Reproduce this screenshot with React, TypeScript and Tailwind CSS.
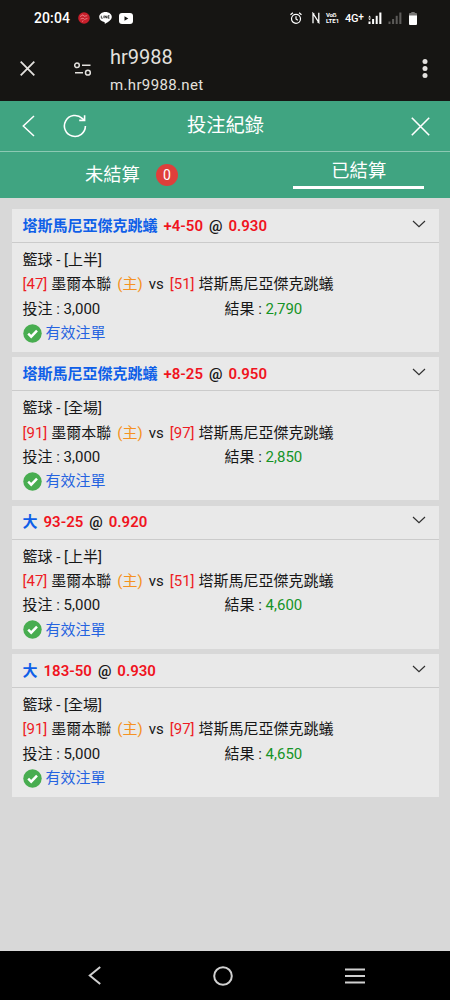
import clsx from 'clsx';

interface Bet {
  pick: string;
  handicap: string;
  odds: string;
  period: string;
  homeScore: number;
  awayScore: number;
  stake: string;
  result: string;
}

const bets: Bet[] = [
  { pick: '塔斯馬尼亞傑克跳蟻', handicap: '+4-50', odds: '0.930', period: '上半', homeScore: 47, awayScore: 51, stake: '3,000', result: '2,790' },
  { pick: '塔斯馬尼亞傑克跳蟻', handicap: '+8-25', odds: '0.950', period: '全場', homeScore: 91, awayScore: 97, stake: '3,000', result: '2,850' },
  { pick: '大', handicap: '93-25', odds: '0.920', period: '上半', homeScore: 47, awayScore: 51, stake: '5,000', result: '4,600' },
  { pick: '大', handicap: '183-50', odds: '0.930', period: '全場', homeScore: 91, awayScore: 97, stake: '5,000', result: '4,650' },
];

function SignalBars({ dim = false }: { dim?: boolean }) {
  return (
    <svg className={clsx('w-[14px] h-3', dim ? 'text-[#5c5b59]' : 'text-white')} viewBox="0 0 14 12" fill="currentColor">
      {dim ? (
        <rect x="0.5" y="9.5" width="2" height="2.5" />
      ) : (
        <path d="M0.3 5.5L1.6 3.5L2.9 5.5zM0.3 6.4H2.9L1.6 8.2zM0.5 9.5h2V12h-2z" />
      )}
      <rect x="4.1" y="7" width="2" height="5" />
      <rect x="7.7" y="3.8" width="2" height="8.2" />
      <rect x="11.3" y="0.5" width="2.1" height="11.5" />
    </svg>
  );
}

function StatusBar() {
  return (
    <div className="flex items-center h-9 pl-[34px] pr-[33px] text-white">
      <span className="w-[44px] text-[14px] font-medium leading-none tracking-[0.1px]">20:04</span>
      <svg className="w-3 h-3" viewBox="0 0 12 12">
        <circle cx="6" cy="6" r="5.8" fill="#c71f2b" />
        <path d="M2 4.6l3-1.8 1 1.5 3.2-.6M2.5 7l2.5-.8 1.6 1.2 2.8-1M4 9.6l1.4-1" stroke="#f08c90" strokeWidth="0.8" fill="none" />
      </svg>
      <svg className="w-[13px] h-3 ml-[9px]" viewBox="0 0 13 12">
        <path d="M6.5 0C2.9 0 .2 2.2.2 5c0 2.5 2.1 4.4 5 4.9.6.1.6.5.5 1.2-.1.7.2.9.8.5 2-1.2 6.3-3.6 6.3-6.6C12.8 2.2 10.1 0 6.5 0z" fill="white" />
        <path d="M2.3 3.7v2.5h1.5M4.9 3.7v2.5M6 6.2V3.7l1.7 2.5V3.7M10.5 3.7H9v2.5h1.5M9 5h1.3" stroke="#161513" strokeWidth="0.75" fill="none" />
      </svg>
      <svg className="w-[14px] h-[11px] ml-[7px]" viewBox="0 0 14 11">
        <rect width="14" height="11" rx="3" fill="white" />
        <path d="M5.5 3.2v4.6L9.3 5.5z" fill="#161513" />
      </svg>

      <div className="flex items-center ml-auto">
        <svg className="w-3 h-3" viewBox="0 0 12 12" fill="none" stroke="white" strokeWidth="1.2">
          <circle cx="6" cy="6.8" r="4.5" />
          <path d="M6 4.2v2.8l1.8 1.2M.5 2.8L2.9.7M11.5 2.8L9.1.7" />
        </svg>
        <svg className="w-2 h-3 ml-[10px]" viewBox="0 0 8 12" fill="none" stroke="white" strokeWidth="1.3">
          <path d="M1 11.2V1.5L6.8 10.3V.8M1 1.5l1.4.5M6.8 10.3l-1.4-.4" />
        </svg>
        <span className="flex flex-col w-[18px] ml-[6px] text-[6px] font-bold leading-[6px]">
          <span className="tracking-[-0.3px]">Voẞ</span>
          <span>LTE1</span>
        </span>
        <span className="w-[20px] ml-px text-[11px] font-medium leading-none tracking-[-0.3px] whitespace-nowrap">
          4G<span className="relative -top-[2px] text-[10px]">+</span>
        </span>
        <span className="ml-[3px] flex">
          <SignalBars />
        </span>
        <span className="ml-[6px] flex">
          <SignalBars dim />
        </span>
        <svg className="w-2 h-[13px] ml-[7px]" viewBox="0 0 8 13">
          <path d="M2.3 0h3.4v1H7a1 1 0 011 1v2H0V2a1 1 0 011-1h1.3z" fill="#777674" />
          <path d="M0 3.5h8V12a1 1 0 01-1 1H1a1 1 0 01-1-1z" fill="white" />
        </svg>
      </div>
    </div>
  );
}

function BrowserBar() {
  return (
    <div className="flex h-[65px] pl-5 pr-[22px] text-[#e3e1de]">
      <svg className="w-[15px] h-[15px] mt-[25px]" viewBox="0 0 15 15" fill="none" stroke="currentColor" strokeWidth="1.8">
        <path d="M0.7 0.7l13.6 13.6M14.3 0.7L0.7 14.3" />
      </svg>
      <svg className="w-[18px] h-[15px] mt-[26px] ml-[39px]" viewBox="0 0 18 15" fill="none" stroke="currentColor" strokeWidth="1.5">
        <circle cx="3" cy="3.3" r="2.3" />
        <path d="M8 3.3h8.5M1 10.7h8" />
        <circle cx="13.9" cy="10.7" r="2.4" />
      </svg>
      <div className="ml-[18px] mt-[9px]">
        <div className="text-[20px] leading-6">hr9988</div>
        <div className="mt-[5px] text-[15px] leading-[22px] tracking-[0.35px]">m.hr9988.net</div>
      </div>
      <svg className="w-[6px] h-[19px] mt-[23px] ml-auto" viewBox="0 0 6 19" fill="currentColor">
        <circle cx="3" cy="2.6" r="2.5" />
        <circle cx="3" cy="9.5" r="2.5" />
        <circle cx="3" cy="16.4" r="2.5" />
      </svg>
    </div>
  );
}

function PageHeader() {
  return (
    <header className="bg-[#40a481] text-white">
      <div className="flex items-center h-[51px] px-[22px] border-b border-[#8cc9b3]">
        <svg className="w-[13px] h-[22px]" viewBox="0 0 13 22" fill="none" stroke="currentColor" strokeWidth="1.5">
          <path d="M12 1L1.3 11L12 21" />
        </svg>
        <svg className="w-6 h-6 ml-7" viewBox="0 0 24 24" fill="none" stroke="currentColor" strokeWidth="1.6">
          <path d="M22.4 12a10.5 10.5 0 11-3.2-7.6l2.2 2" />
          <path d="M21.6 1.2v5.2h-5.4" />
        </svg>
        <h1 className="ml-[100px] text-[19.3px] leading-6">投注紀錄</h1>
        <svg className="w-[19px] h-[19px] ml-auto mr-[-2px]" viewBox="0 0 19 19" fill="none" stroke="currentColor" strokeWidth="1.6">
          <path d="M0.8 0.8l17.4 17.4M18.2 0.8L0.8 18.2" />
        </svg>
      </div>
      <div className="flex h-[46px] text-[18.3px] leading-6">
        <div className="flex flex-1 items-center pl-[85px]">
          <span>未結算</span>
          <span className="flex items-center justify-center w-[22px] h-[22px] ml-4 text-[14px] leading-none bg-[#df3f3b] rounded-full">
            0
          </span>
        </div>
        <div className="flex flex-1 justify-center">
          <div className="w-[131px] h-[37px] pt-[7px] text-center border-b-[3px] border-white">已結算</div>
        </div>
      </div>
    </header>
  );
}

function BetCard({ bet }: { bet: Bet }) {
  return (
    <div className="h-[143px] bg-[#e9e9e9] text-[#171717]">
      <div className="flex items-center justify-between h-[34px] pl-[11px] pr-[13px] border-b border-[#cbcbcb]">
        <div className="flex gap-[6px] font-bold text-[#f0141e] leading-6">
          <span className="text-[#0f5fe8]">{bet.pick}</span>
          <span className="font-semibold">{bet.handicap}</span>
          <span className="font-semibold text-[#171717]">@</span>
          <span className="font-semibold">{bet.odds}</span>
        </div>
        <svg className="w-[14px] h-2 mb-1" viewBox="0 0 14 8" fill="none" stroke="#303030" strokeWidth="1.2">
          <path d="M1 1l6 5.7L13 1" />
        </svg>
      </div>
      <div className="pt-[5px] pl-[11px] leading-[24.3px]">
        <div>籃球 - [{bet.period}]</div>
        <div className="flex whitespace-nowrap">
          <span className="text-[#ed1c24]">[{bet.homeScore}]</span>
          <span className="ml-1">墨爾本聯</span>
          <span className="ml-[6px] text-[#f59222]">(主)</span>
          <span className="ml-[6px]">vs</span>
          <span className="ml-[6px] text-[#ed1c24]">[{bet.awayScore}]</span>
          <span className="ml-1">塔斯馬尼亞傑克跳蟻</span>
        </div>
        <div className="flex">
          <span className="w-[202px]">投注 : {bet.stake}</span>
          <span>
            結果 : <span className="text-[#159326]">{bet.result}</span>
          </span>
        </div>
        <div className="flex items-center text-[#2563e0]">
          <svg className="w-[19px] h-[19px] mr-1" viewBox="0 0 19 19">
            <circle cx="9.5" cy="9.5" r="9.2" fill="#48ad50" />
            <path d="M5.2 9.6l3 3 5.8-5.9" fill="none" stroke="white" strokeWidth="2.5" />
          </svg>
          有效注單
        </div>
      </div>
    </div>
  );
}

function NavBar() {
  return (
    <nav className="flex items-center h-[49px] pl-[88px] pr-[85px] justify-between bg-black text-[#d0d0d0]">
      <svg className="w-[13px] h-[19px]" viewBox="0 0 13 19" fill="none" stroke="currentColor" strokeWidth="2">
        <path d="M12.2 1L1.8 9.5L12.2 18" />
      </svg>
      <svg className="w-5 h-5" viewBox="0 0 20 20" fill="none" stroke="currentColor" strokeWidth="2">
        <circle cx="10" cy="10" r="8.8" />
      </svg>
      <svg className="w-5 h-4 mt-px" viewBox="0 0 20 16" fill="none" stroke="currentColor" strokeWidth="2">
        <path d="M0 1.5h20M0 8h20M0 14.5h20" />
      </svg>
    </nav>
  );
}

export default function App() {
  return (
    <div className="flex flex-col w-[450px] h-[1000px] overflow-hidden bg-[#161513] font-[Roboto,'Noto_Sans_CJK_TC',sans-serif]">
      <StatusBar />
      <BrowserBar />
      <PageHeader />
      <main className="flex flex-col flex-1 gap-[5.4px] px-[11.5px] pt-[11px] bg-[#d8d8d8] text-[15px]">
        {bets.map((bet, i) => (
          <BetCard key={i} bet={bet} />
        ))}
      </main>
      <NavBar />
    </div>
  );
}
